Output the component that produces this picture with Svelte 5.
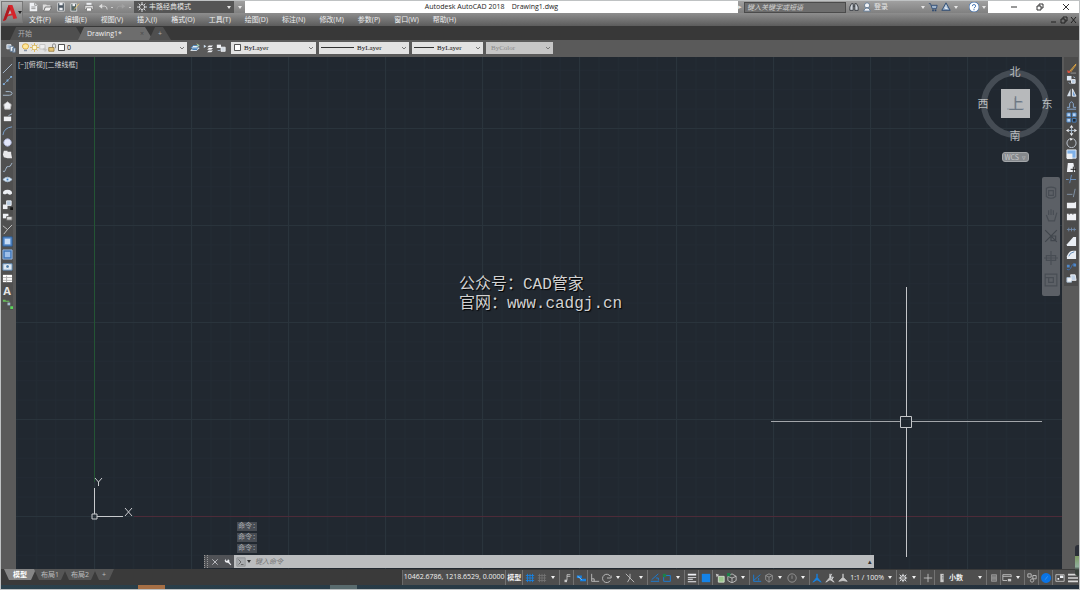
<script>
  const menus = ["文件(F)", "编辑(E)", "视图(V)", "插入(I)", "格式(O)", "工具(T)", "绘图(D)", "标注(N)", "修改(M)", "参数(P)", "窗口(W)", "帮助(H)"];

  const W = "#eef0f4";
  const L = "#a9bdd2";
  const B = "#1583e6";
  const G = "#c9c9c9";
  const N = "none";

  // every icon is a list of [path, fill, stroke] on a 12x12 box
  const icons = {
    new: [["M2 1h6l3 3v7H2z", W, N], ["M8 1v3h3M4 6h5M4 8h5", N, "#8a8a8a"]],
    open: [["M1 3h4l1 1h4v2H4L2 10H1z", "#dcdcdc", N], ["M4 6h8l-3 5H2z", "#eee", "#666"]],
    save: [["M2 1h8v10H2z", "#4a5560", "#ddd"], ["M4 1h4v3H4zM4 7h4v3H4z", W, N]],
    saveas: [["M1 2h7v9H1z", "#566", "#ddd"], ["M3 2h3v3H3z", W, N], ["M5 9l6-7", N, "#f0c66a"]],
    print: [["M3 1h6v3H3z", W, N], ["M1 4h10v5H1z", "#e2e2e2", "#777"], ["M3 7h6v4H3z", "#fff", "#777"]],
    undo: [["M1 5l4-3v6z", "#ddd", N], ["M4 5h4q3 0 3 4", N, "#ddd"]],
    redo: [["M11 5L7 2v6z", "#a2a2a2", N], ["M8 5H4Q1 5 1 9", N, "#a2a2a2"]],
    gear: [["M6 0v12M0 6h12M2 2l8 8M10 2l-8 8", N, W], ["M6 3a3 3 0 1 0 .1 0z", "#555", W]],
    find: [["M1 10V6l2-4h2v8zM7 10V2h2l2 4v4z", "#cfd4da", "#2e3238"], ["M5 5h2", N, "#2e3238"]],
    user: [["M6 1a3 3 0 1 0 .1 0zM2 11q1-4 4-4t4 4z", "#f0f2f5", "#54708d"]],
    cart: [["M1 2h2l2 6h5l1-4H4", "#9fb4cc", "#29466e"], ["M5 9h2v2H5zM8 9h2v2H8z", "#29466e", N]],
    a360: [["M6 1l5 9H1z", "#8fa9c6", "#29466e"], ["M6 4v4M4 7l4 1", N, "#fff"]],
    help: [["M6 0a6 6 0 1 0 .1 0z", "#fff", "#2c63a8"], ["M4 5q0-2 2-2t2 2q0 1-2 2M6 8v2", N, "#2c63a8"]],
    layers: [["M1 2h5v5H1z", L, W], ["M5 4h4v6H5zM8 6h3v5H8z", W, "#5d7794"]],
    bulb: [["M6 1q4 0 4 3T8 8H4Q2 7 2 4t4-3z", "#ffe79a", "#d29b28"], ["M4 9h4v2H4z", "#8895a8", N]],
    sun: [["M6 0v12M0 6h12M2 2l8 8M10 2l-8 8", N, "#dcae3e"], ["M6 3a3 3 0 1 0 .1 0z", "#fff6d0", "#caa544"]],
    frozen: [["M1 2h7v6H1z", "#eee", "#bbb"], ["M8 6v6M5 9h6M6 7l4 4", N, "#bbb"]],
    lock: [["M1 6h7v5H1z", "#e4c376", "#8d7333"], ["M6 6V3q0-2 2-2t2 2v4", N, "#777"]],
    swatch: [["M2 2h8v8H2z", "#fff", "#222"]],
    stack: [["M1 9l3-3h7l-3 3z", "#3f7eb8", W], ["M1 6l3-3h7L8 6z", "#e9eef4", "#3f7eb8"], ["M8 1l3 2-3 1", N, "#bfe0a0"]],
    stack2: [["M5 5l2-2h5l-2 2zM5 8l2-2h5l-2 2zM5 11l2-2h5l-2 2z", W, N], ["M1 2l3 2-3 2", "#cfe0f0", N]],
    stack3: [["M1 2h5v4H1z", W, N], ["M6 5h5v5H6z", "#d0d8e0", W], ["M2 9h3", N, L]],

    line: [["M1 11L11 1", N, L]],
    xline: [["M2 10L10 2", N, "#8795a5"], ["M1 9h2v2H1zM5 5h2v2H5zM9 1h2v2H9z", "#7eb0e2", N]],
    pline: [["M1 9h7q3 0 3-2T8 5H4", N, L]],
    polygon: [["M6 2l4 3-1 5H3L2 5z", W, "#bbb"]],
    rect: [["M2 5h8v5H2z", W, N], ["M7 4l4-2", N, L]],
    arc: [["M1 11Q2 3 11 2", N, "#7fa8d6"]],
    circle: [["M6 2a4 4 0 1 0 .1 0z", "#e2e6fa", "#b4bce0"]],
    cloud: [["M2 2h4v1h4v2l1 5H6l-4-1-1-3z", "#e8e8ea", N]],
    spline: [["M1 10q2 2 3-2t3-3 4-4", N, L]],
    ellipse: [["M1 6q5-5 10 0-5 5-10 0z", "#dce9f5", L], ["M5 5h2v2H5z", "#3a80c4", N]],
    earc: [["M1 7q0-4 5-4t5 4q-2 2-4 1-1-2-3 0-2 0-3-1z", W, N]],
    insert: [["M1 6h5v5H1z", W, N], ["M5 2h5v5H5z", "#b9cce0", W], ["M9 9h3v3H9z", "#151515", N]],
    block: [["M1 3h6v5H1z", W, N], ["M5 6h6v4H5z", "#d9d9d9", "#666"]],
    point: [["M1 2l5 4 5-5M6 6L2 11", N, G]],
    hatch: [["M1 1h10v10H1z", "#5b8dcc", "#2a5f9c"], ["M3 3h6v6H3z", "#c7dcf5", N]],
    gradient: [["M1 1h10v10H1z", "#3e74b8", "#9ab9de"], ["M3 3h6v6H3z", "#9fc0ea", N]],
    region: [["M1 3h10v7H1z", "#dbe7f2", "#5c88b2"], ["M6 4a2 2 0 1 0 .1 0z", "#4b7ca9", "#fff"]],
    table: [["M1 2h10v8H1z", "#fff", N], ["M1 5h10M1 8h10M5 3v7", N, "#aaa"]],
    group: [["M1 2h3v2H1zM4 3h4v1H4z", "#69bd5c", N], ["M6 5h3v3H6z", L, N], ["M9 9h3v3H9z", "#5ad45a", N]],

    erase: [["M4 9l7-8", N, "#f0b548"], ["M5 10l6-8", N, "#d89a3a"], ["M1 8l4 1-1 2H2z", "#d8523e", N], ["M5 11h6", N, "#999"]],
    copy: [["M1 1h5v5H1z", "#dfe9f4", N], ["M6 5h4v4H6z", "#b7cbe0", W], ["M3 8l2 2M8 2l2 1", N, L]],
    mirror: [["M5 2v8H1z", "#d5dfea", N], ["M7 2v8h4z", "#6f9cd0", W]],
    offset: [["M1 10h10M1 8h3V4q2-4 4 0v4h3", N, "#8fb2dc"]],
    array: [["M1 1h4v4H1zM7 1h4v4H7zM1 7h4v4H1z", "#b9d2f0", "#4d83c0"], ["M7 7h4v4H7z", "#1c2733", "#4d83c0"]],
    move: [["M6 0l2 3H4zM6 12l2-3H4zM0 6l3-2v4zM12 6L9 4v4z", W, N], ["M6 3v6M3 6h6", N, L]],
    rotate: [["M8 2a5 5 0 1 1-4 0", N, "#c4ccd6"], ["M4 1l4 1-3 2z", W, N]],
    scale: [["M1 1h10v9H1z", "#7fb1e8", W], ["M1 5h6v6H1z", W, N]],
    stretch: [["M2 1h6l2 10H1z", W, N], ["M5 8h6M8 5v6", N, "#1a1a1a"]],
    trim: [["M0 6h3M5 6h6M6 1L4 10", N, "#6d93bf"]],
    extend: [["M1 8h6M10 2L8 11", N, "#8597ab"]],
    breakAt: [["M1 4h8l2-1v7H1z", W, N]],
    break: [["M1 3h2v1h1V3h3v1h1V3h3v7H1z", W, N]],
    join: [["M1 6h10M3 4v4M6 4v4M9 4v4", N, "#7188a5"]],
    chamfer: [["M11 1v10H1V9l7-8z", "#e9eef4", N]],
    fillet: [["M11 2v9H1V8Q3 2 8 2z", "#e9eef4", N], ["M3 8q1-4 6-5", N, "#5b86b5"]],
    blend: [["M1 9q3 2 5-3t5-2", N, "#3d72b5"], ["M1 4h3v3H1zM8 3h3v3H8z", "#4f87c8", N]],
    explode: [["M1 5h5v5H1z", W, L], ["M5 2h5l1 6H6z", "#bfd0e4", W]],

    grid: [["M3 1v10M6 1v10M9 1v10M1 3h10M1 6h10M1 9h10", N, B]],
    snap: [["M3 1v10M6 1v10M9 1v10M1 3h10M1 6h10M1 9h10", N, "#757575"]],
    infer: [["M6 2h4M6 2v7M6 4h4", N, G], ["M3 8h3v3H3z", G, N]],
    dyn: [["M1 3h6v3H1zM5 7h7v3H5z", B, N], ["M2 4l5 4", N, "#9fd0ff"]],
    ortho: [["M2 1v9h9", N, G], ["M2 7h3v3", N, G]],
    polar: [["M10 4a5 5 0 1 0 0 5M6 6h5V3", N, G]],
    iso: [["M1 1l10 10M6 1v5l-3 5", N, G]],
    track: [["M1 10h10M2 8l8-7M7 6h3v3", N, B]],
    osnap: [["M2 3h8v7H2z", N, B], ["M1 1h4v4H1z", "#1d7f49", N]],
    lwt: [["M1 1h10v2H1zM1 5h10v1H1zM1 7h6v1H1zM1 10h10v1H1z", W, N]],
    trans: [["M1 1h10v10H1z", B, N]],
    cycle: [["M4 4h7v7H4z", "#9ac68d", "#dbe6d7"], ["M1 1l4 1-3 3z", G, N]],
    osnap3: [["M6 1l5 3v5l-5 3-5-3V4zM1 4l5 2 5-2M6 6v6", N, G], ["M0 0h4v4H0z", "#1d7f49", N]],
    ducs: [["M2 2v8h9M2 9l8-7M8 6v3", N, B]],
    filter: [["M6 1l4 2v5l-4 3-4-3V3zM2 3l4 2 4-2M6 5v6", N, "#9b9b9b"]],
    gizmo: [["M6 1a5 5 0 1 0 .1 0zM6 3v4", N, "#9b9b9b"]],
    annoOn: [["M6 1v4l5 6-5-3-5 3 5-6z", B, B]],
    annoAuto: [["M6 1v4l5 6-5-3-5 3 5-6z", G, G], ["M8 1l-2 4h4L8 8", N, W]],
    annoScale: [["M6 1v4l5 5-5-1-5 1 5-5z", G, G]],
    ws: [["M6 1v10M1 6h10M2 2l8 8M10 2l-8 8", N, W], ["M6 3a3 3 0 1 0 .1 0z", "#888", W]],
    plus: [["M6 1v10M1 6h10", N, G]],
    units: [["M4 1h4v10H4z", G, N], ["M6 3h2M6 5h2M6 7h2", N, "#777"]],
    quick: [["M3 2h6v8H3zM3 5h6M3 7h6", "#777", "#999"]],
    lockui: [["M1 2h10v3M1 2v7h5M1 4h10", N, G], ["M7 7h4v3H7z", G, N]],
    isolate: [["M1 1h4v4H1zM7 3h4v4H7z", N, G], ["M6 7a2 2 0 1 0 .1 0z", N, G]],
    hardware: [["M6 0a6 6 0 1 0 .1 0z", "#0a74e6", N], ["M8 4L5 8", N, "#3f9bf5"]],
    clean: [["M1 2h10v8H1z", N, G], ["M3 6h2v2H3zM6 3h4v3H6z", W, N]],
    custom: [["M0 1h12v2H0zM0 5h12v2H0zM0 9h12v2H0z", "#d8d8d8", N]],
    wrench: [["M2 1l1 3h2L6 2q3 1 2 4l3 4-1 1-4-4Q2 8 1 4z", W, N]],
    cross: [["M2 2l8 8M10 2l-8 8", N, W]],
    prompt: [["M1 1h10v10H1z", "#a9acaf", "#8d9093"], ["M3 3l3 3-3 3M6 9h3", N, "#555"]],

    wheel: [["M2 2q4-2 8 0v7q-4 3-8 0z", N, "#484d54"], ["M4 4h4v4H4z", N, "#484d54"]],
    pan: [["M2 6l2 5h5l2-7M4 6V2M6 6V1M8 6V2", N, "#484d54"]],
    zoom: [["M1 1l10 10M11 1L1 11M6 6h4v4H6z", N, "#41464d"]],
    orbit: [["M6 0v12M2 4h8v4H2zM0 6h12", N, "#484d54"]],
    motion: [["M1 1h10v10H1zM4 4h4v4H4zM1 4h3", N, "#484d54"]],
  };

  const quick = [
    ["new", "新建"], ["open", "打开"], ["save", "保存"], ["saveas", "另存为"],
    ["print", "打印"], ["undo", "放弃"], ["redo", "重做"],
  ];

  const draw = ["line", "xline", "pline", "polygon", "rect", "arc", "circle", "cloud", "spline", "ellipse", "earc", "insert", "block", "point", "hatch", "gradient", "region", "table", "text", "group"];
  const modify = ["erase", "copy", "mirror", "offset", "array", "move", "rotate", "scale", "stretch", "trim", "extend", "breakAt", "break", "join", "chamfer", "fillet", "blend", "explode"];
  const nav = ["wheel", "pan", "zoom", "orbit", "motion"];

  // "sep" starts a new group, "menu" adds the drop-down arrow
  const status = [
    { icon: "grid", sep: true }, { icon: "snap", menu: true },
    { icon: "infer", sep: true }, { icon: "dyn", sep: true }, { icon: "ortho", sep: true },
    { icon: "polar", menu: true }, { icon: "iso", menu: true },
    { icon: "track", sep: true }, { icon: "osnap", menu: true },
    { icon: "lwt", sep: true }, { icon: "trans", sep: true }, { icon: "cycle", sep: true },
    { icon: "osnap3", menu: true }, { icon: "ducs", sep: true },
    { icon: "filter", menu: true }, { icon: "gizmo", menu: true },
    { icon: "annoOn", sep: true }, { icon: "annoAuto" }, { icon: "annoScale" },
    { text: "1:1 / 100%", menu: true }, { icon: "ws", sep: true, menu: true },
    { icon: "plus", sep: true }, { icon: "units", sep: true },
    { text: "小数", menu: true, wide: true }, { icon: "quick", sep: true },
    { icon: "lockui", sep: true, menu: true }, { icon: "isolate", sep: true },
    { icon: "hardware", sep: true }, { icon: "clean", sep: true }, { icon: "custom" },
  ];

  let layout = $state("模型");
  let command = $state("");
</script>

{#snippet icon(name)}
  <svg class="icon" viewBox="0 0 12 12" aria-hidden="true">
    {#each icons[name] as [d, fill, stroke]}
      <path {d} {fill} {stroke} />
    {/each}
  </svg>
{/snippet}

{#snippet arrow()}
  <svg class="arrow" viewBox="0 0 4 3" aria-hidden="true"><path d="M0 0h4L2 3z" fill="currentColor" /></svg>
{/snippet}

{#snippet chevron()}
  <svg class="chevron" viewBox="0 0 6 4" aria-hidden="true"><path d="M1 1l2 2 2-2" fill="none" stroke="#777" /></svg>
{/snippet}

<div class="window">
  <header class="title">
    <div class="quick">
      {#each quick as [name, label]}
        <button aria-label={label}>{@render icon(name)}</button>
        {#if name === "undo" || name === "redo"}<i class="dot"></i>{/if}
      {/each}
      <label class="workspace">
        {@render icon("gear")}
        <select aria-label="工作空间"><option>丰路经典模式</option></select>
        {@render arrow()}
      </label>
      <button class="more" aria-label="自定义">{@render arrow()}</button>
    </div>
    <h1>Autodesk AutoCAD 2018 &nbsp;&nbsp; Drawing1.dwg</h1>
    <div class="info">
      <span class="tip">▸</span>
      <input class="search" aria-label="搜索" placeholder="键入关键字或短语" />
      <button aria-label="查找">{@render icon("find")}</button>
      <button class="login">{@render icon("user")}登录</button>
      {@render arrow()}
      <button aria-label="商店">{@render icon("cart")}</button>
      <button aria-label="A360">{@render icon("a360")}</button>
      {@render arrow()}
      <button class="help" aria-label="帮助">{@render icon("help")}</button>
      {@render arrow()}
    </div>
    <div class="controls">
      <button aria-label="最小化"><svg viewBox="0 0 8 8"><path d="M1 4h6" /></svg></button>
      <button aria-label="还原"><svg viewBox="0 0 8 8"><path d="M1 3h4v4H1zM3 3V1h4v4H5" /></svg></button>
      <button aria-label="关闭"><svg viewBox="0 0 8 8"><path d="M1 1l6 6M7 1L1 7" /></svg></button>
    </div>
  </header>

  <button class="logo" aria-label="应用程序菜单">
    <svg viewBox="0 0 16 18"><path d="M6 1h4l5 14-4 1-1-4-5 1-2 4-3 1z" fill="#d6252b" /><path d="M7 5l2 5-4 1z" fill="#b9babc" /><path d="M6 1L0 18l3-1 5-12z" fill="#ad1b22" /></svg>
    {@render arrow()}
  </button>

  <nav class="menu">
    {#each menus as item}
      <button>{item}</button>
    {/each}
    <div class="docs">
      <button aria-label="最小化图形"><svg viewBox="0 0 8 8"><path d="M1 6h5" /></svg></button>
      <button aria-label="还原图形"><svg viewBox="0 0 8 8"><path d="M1 3h4v4H1zM3 3V1h4v4H5" /></svg></button>
      <button aria-label="关闭图形"><svg viewBox="0 0 8 8"><path d="M1 1l5 6M6 1L1 7" /></svg></button>
    </div>
  </nav>

  <div class="tabs">
    <button class="start">开始</button>
    <button class="active">Drawing1*<span>×</span></button>
    <button class="add" aria-label="新图形">+</button>
  </div>

  <div class="props">
    <button aria-label="图层特性">{@render icon("layers")}</button>
    <label class="combo layer">
      {@render icon("bulb")}{@render icon("sun")}{@render icon("frozen")}{@render icon("lock")}{@render icon("swatch")}
      <select aria-label="图层"><option>0</option></select>
      {@render chevron()}
    </label>
    <button aria-label="置为当前">{@render icon("stack")}</button>
    <button aria-label="上一个图层">{@render icon("stack2")}</button>
    <button aria-label="图层状态">{@render icon("stack3")}</button>
    <label class="combo color">
      {@render icon("swatch")}
      <select aria-label="颜色"><option>ByLayer</option></select>
      {@render chevron()}
    </label>
    <label class="combo linetype">
      <i></i>
      <select aria-label="线型"><option>ByLayer</option></select>
      {@render chevron()}
    </label>
    <label class="combo weight">
      <i></i>
      <select aria-label="线宽"><option>ByLayer</option></select>
      {@render chevron()}
    </label>
    <label class="combo plot">
      <select aria-label="打印样式" disabled><option>ByColor</option></select>
      {@render chevron()}
    </label>
  </div>

  <main>
    <aside class="left">
      <div class="tools draw">
        {#each draw as name}
          <button aria-label={name}>{#if name === "text"}A{:else}{@render icon(name)}{/if}</button>
        {/each}
      </div>
    </aside>

    <section class="canvas">
      <svg class="drawing" aria-hidden="true">
        <defs>
          <pattern id="minor" x="78" y="71" width="19.4" height="19.4" patternUnits="userSpaceOnUse">
            <path d="M.5 0v19.4M0 .5h19.4" stroke="#232b34" fill="none" />
          </pattern>
          <pattern id="major" x="78" y="71" width="97" height="97" patternUnits="userSpaceOnUse">
            <path d="M.5 0v97M0 .5h97" stroke="#2a343c" fill="none" />
          </pattern>
        </defs>
        <rect width="100%" height="100%" fill="url(#minor)" />
        <rect width="100%" height="100%" fill="url(#major)" />
        <path d="M78.500 0V425" stroke="#245434" />
        <line x1="118" y1="459.500" x2="100%" y2="459.500" stroke="#4d2b38" />
        <g fill="none" stroke="#c8cacd">
          <path d="M78.500 431v26M81 459.500h26M76 457h5v5h-5z" />
          <path d="M79 421l3.500 4 3.500-4M82.500 425v4M109 451l7 8M116 451l-7 8" />
        </g>
        <g fill="none" stroke="#c4c6c9">
          <path d="M890.500 230v129M890.500 371v129" />
          <path d="M755 364.500h129M896 364.500h130" stroke="#a3a6aa" />
          <path d="M884.500 359.500h11v11h-11z" />
        </g>
      </svg>

      <p class="view">[−][俯视][二维线框]</p>

      <p class="mark">公众号：CAD管家<br />官网：www.cadgj.cn</p>

      <div class="cube">
        <svg viewBox="0 0 80 84">
          <circle cx="40" cy="42" r="31" fill="none" stroke="#454c54" stroke-width="6" />
          <rect x="26" y="27" width="29" height="29" fill="#b7b9bb" />
          <path d="M32 47h17M40 36v11M40 40h8" fill="none" stroke="#8c97a3" />
          <g fill="#b9bcbf" font-size="11" text-anchor="middle">
            <text x="40" y="14">北</text>
            <text x="8" y="46">西</text>
            <text x="72" y="46">东</text>
            <text x="40" y="78">南</text>
            <text x="41" y="47" font-size="15" fill="#6c7782">上</text>
          </g>
        </svg>
        <button>WCS <span>▿</span></button>
      </div>

      <div class="navbar">
        {#each nav as name}
          <button aria-label={name}>{@render icon(name)}</button>
        {/each}
      </div>

      <div class="history">
        <span>命令:</span>
        <span>命令:</span>
        <span>命令:</span>
      </div>
      <div class="command">
        <span class="grip"></span>
        <button aria-label="关闭命令行">{@render icon("cross")}</button>
        <button aria-label="自定义命令行">{@render icon("wrench")}</button>
        <div class="entry">
          {@render icon("prompt")}
          {@render arrow()}
          <input aria-label="命令" placeholder="键入命令" bind:value={command} />
          <span>▴</span>
        </div>
      </div>
    </section>

    <aside class="right">
      <div class="tools modify">
        {#each modify as name}
          <button aria-label={name}>{@render icon(name)}</button>
        {/each}
      </div>
    </aside>
  </main>

  <footer>
    <div class="layouts">
      {#each ["模型", "布局1", "布局2"] as name}
        <button class:current={layout === name} onclick={() => (layout = name)}>{name}</button>
      {/each}
      <button class="add" aria-label="新建布局">+</button>
    </div>
    <div class="status">
      <span class="coords">10462.6786, 1218.6529, 0.0000</span>
      <button class="space sep">模型</button>
      {#each status as item}
        <button class:sep={item.sep} class:wide={item.wide} class:label={item.text} aria-label={item.icon}>
          {#if item.icon}{@render icon(item.icon)}{:else}{item.text}{/if}
          {#if item.menu}{@render arrow()}{/if}
        </button>
      {/each}
    </div>
  </footer>
  <div class="taskbar"><i></i><i></i></div>
  <i class="gadget"></i>
</div>

<style>
  :global(body) {
    background: #bfc2c3;
  }

  .window {
    position: relative;
    box-sizing: border-box;
    height: 100vh;
    border: 1px solid #bfc2c3;
    display: flex;
    flex-direction: column;
    overflow: hidden;
    background: #3a3a3a;
    color: #e6e6e6;
    font-family: "Open Sans", "Noto Sans CJK SC", sans-serif;
    font-size: 7px;
    line-height: 10px;
  }

  button,
  input,
  select {
    margin: 0;
    padding: 0;
    border: 0;
    background: none;
    color: inherit;
    font: inherit;
    border-radius: 0;
    outline: none;
    appearance: none;
    white-space: nowrap;
  }

  button {
    display: flex;
    align-items: center;
    justify-content: center;
  }

  select {
    flex: 1;
    min-width: 0;
    opacity: 1;
  }

  .icon {
    width: 10px;
    height: 10px;
    flex: none;
  }

  .arrow {
    width: 4px;
    height: 3px;
    flex: none;
  }

  .chevron {
    width: 6px;
    height: 4px;
    flex: none;
  }

  /* title bar */
  .title {
    flex: none;
    height: 12px;
    display: flex;
    background: #fff;
  }

  .quick {
    width: 244px;
    padding-left: 25px;
    box-sizing: border-box;
    display: flex;
    align-items: center;
    background: linear-gradient(#a0a0a0, #808080);
  }

  .quick button {
    width: 14px;
  }

  .dot {
    width: 2px;
    height: 1px;
    margin: 0 1px;
    background: #ccc;
  }

  .workspace {
    flex: 1;
    height: 12px;
    margin-left: 2px;
    padding: 0 3px;
    display: flex;
    align-items: center;
    gap: 2px;
    background: #555;
  }

  .quick .more {
    width: 11px;
  }

  h1 {
    flex: 1;
    margin: 0;
    color: #222;
    font-size: 7px;
    font-weight: 400;
    line-height: 12px;
    text-align: center;
    white-space: pre;
  }

  .info {
    width: 250px;
    display: flex;
    align-items: center;
    gap: 3px;
    background: linear-gradient(#a0a0a0, #808080);
  }

  .info .tip {
    width: 3px;
  }

  .info .search {
    flex: none;
    width: 102px;
    height: 11px;
    box-sizing: border-box;
    padding-left: 2px;
    border: 1px solid #4b4b4b;
    background: #6d6d6d;
    font-style: italic;
  }

  .search::placeholder {
    color: #d4d4d4;
  }

  .info .login {
    gap: 2px;
    margin-right: 30px;
  }

  .info .help {
    margin-left: 8px;
  }

  .controls {
    width: 91px;
    display: flex;
    justify-content: flex-end;
  }

  .controls button {
    width: 26px;
  }

  .controls svg,
  .docs svg {
    width: 8px;
    height: 8px;
    fill: none;
    stroke: #333;
  }

  .logo {
    position: absolute;
    top: 0;
    left: 0;
    width: 22px;
    height: 22px;
    border: 1px solid #777;
    background: linear-gradient(#b4b4b4, #7c7c7c);
    color: #222;
  }

  .logo > svg:first-child {
    width: 15px;
    height: 17px;
  }

  .menu {
    flex: none;
    height: 13px;
    padding-left: 28px;
    display: flex;
    gap: 14px;
    background: linear-gradient(#8e8e8e, #5c5c5c);
    color: #f0f0f0;
  }

  .docs {
    display: flex;
    gap: 2px;
    margin-left: auto;
    padding-right: 1px;
  }

  .docs svg {
    stroke: #222;
  }

  /* drawing tabs */
  .tabs {
    flex: none;
    height: 14px;
    padding: 1px 0 0 9px;
    box-sizing: border-box;
    display: flex;
    background: #383838;
  }

  .tabs button {
    clip-path: polygon(6px 0, calc(100% - 8px) 0, 100% 100%, 0 100%);
    background: #4f4f4f;
    color: #b0b0b0;
  }

  .tabs .start {
    width: 74px;
    padding-left: 8px;
    justify-content: flex-start;
  }

  .tabs .active {
    width: 75px;
    margin: 0 -4px 0 -6px;
    padding: 0 9px;
    justify-content: space-between;
    background: #6d6d6d;
    color: #f0f0f0;
  }

  .tabs .active span {
    color: #4a4a4a;
  }

  .tabs .add {
    width: 22px;
  }

  /* layer and property combos */
  .props {
    flex: none;
    height: 17px;
    padding: 0 5px 2px;
    box-sizing: border-box;
    display: flex;
    align-items: center;
    gap: 3px;
    background: #5a5a5a;
  }

  .combo {
    height: 12px;
    box-sizing: border-box;
    display: flex;
    align-items: center;
    gap: 2px;
    padding: 0 2px;
    background: #e2e2e2;
    color: #111;
    font-family: "Liberation Serif", "Noto Sans CJK SC", serif;
  }

  .combo .icon {
    width: 9px;
    height: 9px;
  }

  .layer {
    width: 168px;
    gap: 0;
    font-family: "Open Sans", sans-serif;
  }

  .layer select {
    padding-left: 1px;
  }

  .color {
    width: 85px;
    margin-left: 2px;
  }

  .linetype {
    width: 90px;
  }

  .weight {
    width: 71px;
  }

  .plot {
    width: 67px;
    padding-left: 5px;
    background: #c6c6c6;
    color: #8a8a8a;
  }

  .combo i {
    width: 33px;
    height: 1px;
    margin-right: 1px;
    background: #333;
  }

  .weight i {
    width: 20px;
  }

  /* work area */
  main {
    flex: 1;
    min-height: 0;
    display: flex;
    background: #5a5a5a;
  }

  .left {
    width: 15px;
  }

  .right {
    width: 17px;
  }

  .tools {
    display: flex;
    flex-direction: column;
    justify-content: space-between;
    align-items: center;
  }

  .tools .icon {
    width: 11px;
    height: 11px;
  }

  .tools button {
    height: 12px;
    font-size: 11px;
    font-weight: 700;
  }

  .draw {
    height: 248px;
    margin: 0 3px 0 0;
    padding-top: 5px;
    background: #505050;
  }

  .modify {
    height: 223px;
    margin: 0 1px 0 2px;
    padding: 5px 0 1px;
    background: #4c4c4c;
  }

  .canvas {
    position: relative;
    flex: 1;
    min-width: 0;
    background: #212830;
    overflow: hidden;
  }

  .drawing {
    position: absolute;
    width: 100%;
    height: 100%;
  }

  .view {
    position: absolute;
    top: 3px;
    left: 2px;
    margin: 0;
    color: #d5d5d5;
  }

  .mark {
    position: absolute;
    top: 219px;
    left: 443px;
    margin: 0;
    color: #d2d2d2;
    font-family: "Liberation Mono", "Noto Sans CJK SC", monospace;
    font-size: 16px;
    line-height: 19px;
    text-shadow: 1px 1px 1px #000;
  }

  .cube {
    position: absolute;
    top: 5px;
    right: 7px;
    width: 80px;
    display: flex;
    flex-direction: column;
    align-items: center;
    gap: 6px;
    font-family: "Noto Sans CJK SC", sans-serif;
  }

  .cube svg {
    width: 80px;
    height: 84px;
  }

  .cube button {
    width: 27px;
    height: 10px;
    padding: 0 2px;
    justify-content: space-between;
    border: 1px solid #a4a7aa;
    border-radius: 3px;
    background: #85898d;
    color: #c5c7c9;
  }

  .navbar {
    position: absolute;
    top: 120px;
    right: 2px;
    width: 18px;
    height: 119px;
    padding: 5px 0;
    box-sizing: border-box;
    display: flex;
    flex-direction: column;
    align-items: center;
    justify-content: space-around;
    border-radius: 2px;
    background: #5c6066;
  }

  .navbar .icon {
    width: 14px;
    height: 14px;
  }

  .history {
    position: absolute;
    bottom: 16px;
    left: 221px;
    display: flex;
    flex-direction: column;
    gap: 2px;
    font-family: "Liberation Mono", "Noto Sans CJK SC", monospace;
    line-height: 9px;
  }

  .history span {
    padding: 0 1px;
    background: #474c53;
    color: #a9acb0;
  }

  .command {
    position: absolute;
    left: 188px;
    right: 188px;
    bottom: 1px;
    height: 13px;
    display: flex;
    background: #505256;
  }

  .command > button {
    width: 13px;
  }

  .command > button .icon {
    width: 8px;
    height: 8px;
  }

  .grip {
    width: 4px;
    border-right: 1px dotted #999;
    border-left: 1px dotted #999;
    box-sizing: border-box;
  }

  .entry {
    flex: 1;
    display: flex;
    align-items: center;
    gap: 1px;
    padding: 0 2px;
    background: #bbbdbf;
    color: #333;
  }

  .entry input {
    flex: 1;
    padding-left: 3px;
    font-style: italic;
  }

  .entry input::placeholder {
    color: #777;
  }

  /* layout tabs and status bar */
  footer {
    flex: none;
    height: 16px;
    display: flex;
    justify-content: space-between;
    background: #3a3a3a;
  }

  .layouts {
    height: 11px;
    padding-left: 3px;
    display: flex;
  }

  .layouts button {
    width: 32px;
    margin-right: -2px;
    clip-path: polygon(0 0, 100% 0, calc(100% - 5px) 100%, 5px 100%);
    background: #555;
    color: #bdbdbd;
  }

  .layouts .current {
    background: #858585;
    color: #fff;
    font-weight: 700;
  }

  .layouts .add {
    width: 20px;
  }

  .status {
    margin-top: 1px;
    display: flex;
    border-left: 1px solid #6a6a6a;
    background: #4e4e4e;
    color: #f0f0f0;
  }

  .coords {
    width: 102px;
    line-height: 14px;
    text-align: center;
    white-space: nowrap;
  }

  .status button {
    min-width: 13px;
    gap: 3px;
  }

  .status .sep {
    min-width: 14px;
    border-left: 1px solid #727272;
  }

  .status button:has(.arrow) {
    padding: 0 4px 0 1px;
    gap: 4px;
  }

  .status .space {
    width: 17px;
    font-weight: 700;
  }

  .status .label {
    padding-left: 3px;
  }

  .status .wide {
    width: 38px;
    justify-content: space-between;
    font-weight: 700;
  }

  .taskbar {
    flex: none;
    height: 4px;
    display: flex;
    gap: 165px;
    padding-left: 137px;
    background: linear-gradient(90deg, #2b414c, #24303c);
  }

  .taskbar i {
    width: 27px;
    background: #596b6e;
  }

  .taskbar i:first-child {
    background: #a66f45;
  }

  /* desktop gadget peeking in over the window edge */
  .gadget {
    position: absolute;
    right: 0;
    bottom: 13px;
    width: 4px;
    height: 31px;
    border-radius: 3px 0 0 3px;
    background: linear-gradient(#2b2f38 34%, #7d9a62 35%, #8fae9c 70%, #39413c 80%);
  }
</style>
